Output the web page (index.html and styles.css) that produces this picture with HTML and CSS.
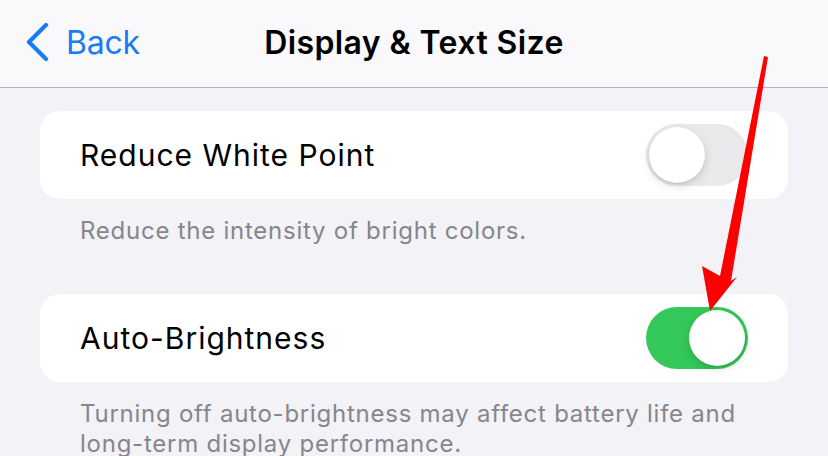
FILE: index.html
```html
<html>
<head>
    <link rel="stylesheet" href="styles.css">
</head>
<body>
    <div class="screen">
        <div class="navbar">
            <div class="back">
                <svg class="chevron" width="24" height="40" viewBox="0 0 24 40">
                    <path d="M20 2 L3 19 L20 36" fill="none" stroke="#1a7cf5" stroke-width="4.2" stroke-linecap="round" stroke-linejoin="round"/>
                </svg>
                <span>Back</span>
            </div>
            <div class="title">Display &amp; Text Size</div>
            <div></div>
        </div>

        <div class="group">
            <div class="cell">
                <span class="label">Reduce White Point</span>
                <div class="switch"><div class="knob"></div></div>
            </div>
            <div class="footer">Reduce the intensity of bright colors.</div>
        </div>

        <div class="group">
            <div class="cell">
                <span class="label">Auto-Brightness</span>
                <div class="switch on"><div class="knob"></div></div>
            </div>
            <div class="footer">Turning off auto-brightness may affect battery life and long-term display performance.</div>
        </div>

        <!-- red pointer drawn on top of the screen -->
        <svg class="pointer" width="828" height="456" viewBox="0 0 828 456">
            <polygon points="764,56 768,57 731,281 737,277 710,311 702,266 720,276" fill="#ff0000"/>
        </svg>
    </div>
</body>
</html>
```

FILE: styles.css
```css
body {
    margin: 0;
    background-color: #f2f2f7;
    font-family: Inter, "Noto Sans", sans-serif;
}
.screen {
    position: relative;
    width: 828px;
    height: 456px;
    overflow: hidden;
}
.navbar {
    height: 88px;
    box-sizing: border-box;
    background-color: #f9f9fb;
    border-bottom: 1px solid #b4b4b8;
    display: grid;
    grid-template-columns: 1fr auto 1fr;
    align-items: center;
    padding: 0 0 2px 0;
}
.back {
    display: flex;
    align-items: center;
    gap: 16px;
    padding-left: 26px;
    color: #1a7cf5;
    font-size: 32px;
    letter-spacing: -0.2px;
}
.title {
    font-size: 32px;
    font-weight: 600;
    letter-spacing: 0.4px;
    color: #000;
}
.group {
    margin: 23px 40px 0 40px;
}
.group + .group {
    margin-top: 48px;
}
.cell {
    height: 88px;
    background-color: #fff;
    border-radius: 20px;
    display: flex;
    align-items: center;
    justify-content: space-between;
    padding: 0 40px;
}
.label {
    font-size: 30px;
    color: #000;
    letter-spacing: 1px;
}
.switch {
    width: 102px;
    height: 62px;
    border-radius: 31px;
    background-color: #e9e9eb;
    position: relative;
}
.switch .knob {
    position: absolute;
    top: 3px;
    left: 3px;
    width: 56px;
    height: 56px;
    border-radius: 50%;
    background-color: #fff;
    box-shadow: 0 3px 8px rgba(0, 0, 0, 0.15), 0 1px 1px rgba(0, 0, 0, 0.08);
}
.switch.on {
    background-color: #34c759;
}
.switch.on .knob {
    left: 43px;
}
.footer {
    margin-top: 17px;
    padding: 0 40px;
    font-size: 24px;
    line-height: 30px;
    color: #86868b;
    letter-spacing: 0.75px;
}
.pointer {
    position: absolute;
    top: 0;
    left: 0;
}
```
